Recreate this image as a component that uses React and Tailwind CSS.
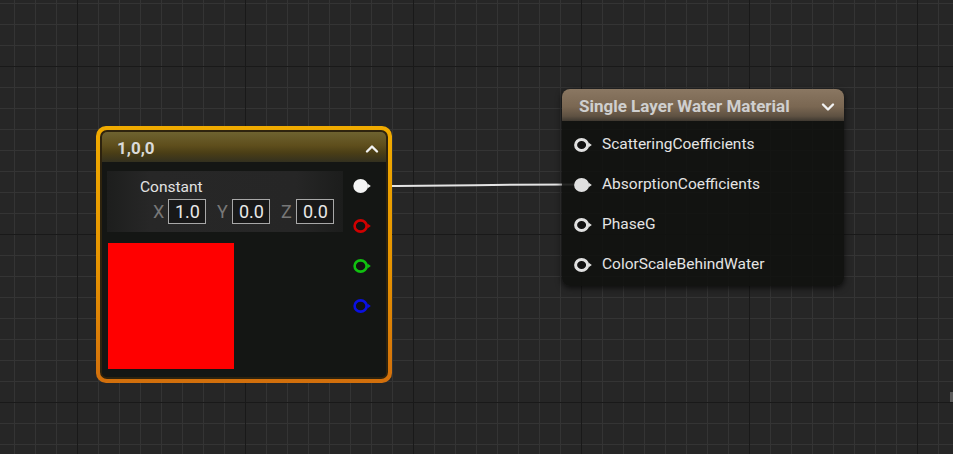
import React from 'react';

const FONT = { fontFamily: 'Roboto, "Noto Sans", sans-serif' };

function Pin({ color = '#d8d8d8', filled = false, w = 2.6 }) {
  return (
    <svg width="20" height="16" viewBox="0 0 20 16" className="block">
      <ellipse
        cx="7.6"
        cy="8"
        rx="6"
        ry="5.6"
        fill={filled ? color : '#121212'}
        stroke={color}
        strokeWidth={w}
      />
      <path d="M14.4 5.5 L17.8 8 L14.4 10.5 Z" fill={color} />
    </svg>
  );
}

function Chevron({ up = false }) {
  return (
    <svg width="14" height="10" viewBox="0 0 14 10" className="block">
      <path
        d={up ? 'M2 7.5 L7 2.5 L12 7.5' : 'M2 2.5 L7 7.5 L12 2.5'}
        fill="none"
        stroke="#f2f2f2"
        strokeWidth="2.4"
        strokeLinecap="round"
        strokeLinejoin="round"
      />
    </svg>
  );
}

function VecInput({ label, value }) {
  return (
    <div className="flex items-center gap-[3px]">
      <span className="w-[12px] text-[18px] leading-none text-[#777]">{label}</span>
      <div className="flex h-[25px] w-[38px] items-center border border-[#a8a8a8] bg-[#181818] pl-[6px] text-[18px] leading-none text-[#e8e8e8]">
        {value}
      </div>
    </div>
  );
}

function ConstantNode() {
  return (
    <div className="absolute left-[96px] top-[126px] h-[257px] w-[296px] rounded-[10px] bg-[linear-gradient(180deg,#f0ab00_0%,#e69300_55%,#d26f0c_100%)] p-[4px]">
      <div className="flex h-full flex-col overflow-hidden rounded-[7px] border-2 border-[#2e230e] bg-[#141614]">
        <div className="flex h-[30px] shrink-0 items-center justify-between bg-[linear-gradient(180deg,#6e6230_0%,#5e4e1c_45%,#4a3e16_70%,#33301f_100%)] pl-[15px] pr-[7px] pt-[3px]">
          <span className="text-[17px] font-bold text-[#dadada]">1,0,0</span>
          <Chevron up />
        </div>
        <div className="flex flex-1 bg-[#141614]">
          <div className="flex flex-1 flex-col pl-[5px] pt-[9px]">
            <div className="flex h-[61px] w-[236px] flex-col bg-[linear-gradient(90deg,#1d1e1d_0%,#272727_18%,#262626_80%,#1c1d1c_100%)] pl-[33px] pt-[6px]">
              <span className="text-[15.5px] leading-[20px] text-[#e2e2e2]">Constant</span>
              <div className="mt-[2px] flex items-center gap-[11px] pl-[13px]">
                <VecInput label="X" value="1.0" />
                <VecInput label="Y" value="0.0" />
                <VecInput label="Z" value="0.0" />
              </div>
            </div>
            <div className="ml-[1px] mt-[11px] h-[126px] w-[126px] bg-[#ff0000]" />
          </div>
          <div className="flex w-[34px] flex-col pt-[4px] pl-[1px]">
            <div className="flex h-[40px] items-center"><Pin color="#f4f4f4" filled /></div>
            <div className="flex h-[40px] items-center"><Pin color="#d00000" /></div>
            <div className="flex h-[40px] items-center"><Pin color="#10c010" /></div>
            <div className="flex h-[40px] items-center"><Pin color="#0a10e0" /></div>
          </div>
        </div>
      </div>
    </div>
  );
}

const WATER_INPUTS = [
  { name: 'ScatteringCoefficients', connected: false },
  { name: 'AbsorptionCoefficients', connected: true },
  { name: 'PhaseG', connected: false },
  { name: 'ColorScaleBehindWater', connected: false },
];

function WaterNode() {
  return (
    <div className="absolute left-[562px] top-[89px] flex h-[197px] w-[282px] flex-col overflow-hidden rounded-[8px] bg-[#111210]/90 shadow-[0_2px_6px_rgba(0,0,0,0.7)]">
      <div className="flex h-[32px] shrink-0 items-center justify-between bg-[linear-gradient(180deg,#8a7762_0%,#7a6752_55%,#5e5142_85%,#3e3830_100%)] pl-[17px] pr-[9px] pt-[3px]">
        <span className="text-[17px] font-bold text-[#cfcfcf]">Single Layer Water Material</span>
        <Chevron />
      </div>
      <div className="flex flex-col pt-[4px] pl-[12px]">
        {WATER_INPUTS.map((p) => (
          <div key={p.name} className="flex h-[40px] items-center gap-[8px]">
            <Pin color="#e0e0e0" filled={p.connected} w={3} />
            <span className="text-[15.5px] text-[#e4e4e4]">{p.name}</span>
          </div>
        ))}
      </div>
    </div>
  );
}

export default function App() {
  return (
    <div
      style={FONT}
      className="relative h-[454px] w-[953px] overflow-hidden bg-[#262626] [background-image:linear-gradient(90deg,#191919_1px,transparent_1px),linear-gradient(180deg,#191919_1px,transparent_1px),linear-gradient(90deg,#343434_1px,transparent_1px),linear-gradient(180deg,#343434_1px,transparent_1px)] [background-size:168px_168px,168px_168px,21px_21px,21px_21px] [background-position:77px_66px,77px_66px,14px_3px,14px_3px]"
    >
      {/* wire between nodes */}
      <svg className="absolute left-0 top-0" width="953" height="454">
        <path
          d="M372 186 C 470 186, 480 184.5, 580 184.5"
          fill="none"
          stroke="#e4e4e4"
          strokeWidth="2"
        />
      </svg>
      <ConstantNode />
      <WaterNode />
      <div className="absolute left-[950px] top-[392px] h-[10px] w-[3px] bg-[#5a5a5a]" />
    </div>
  );
}
